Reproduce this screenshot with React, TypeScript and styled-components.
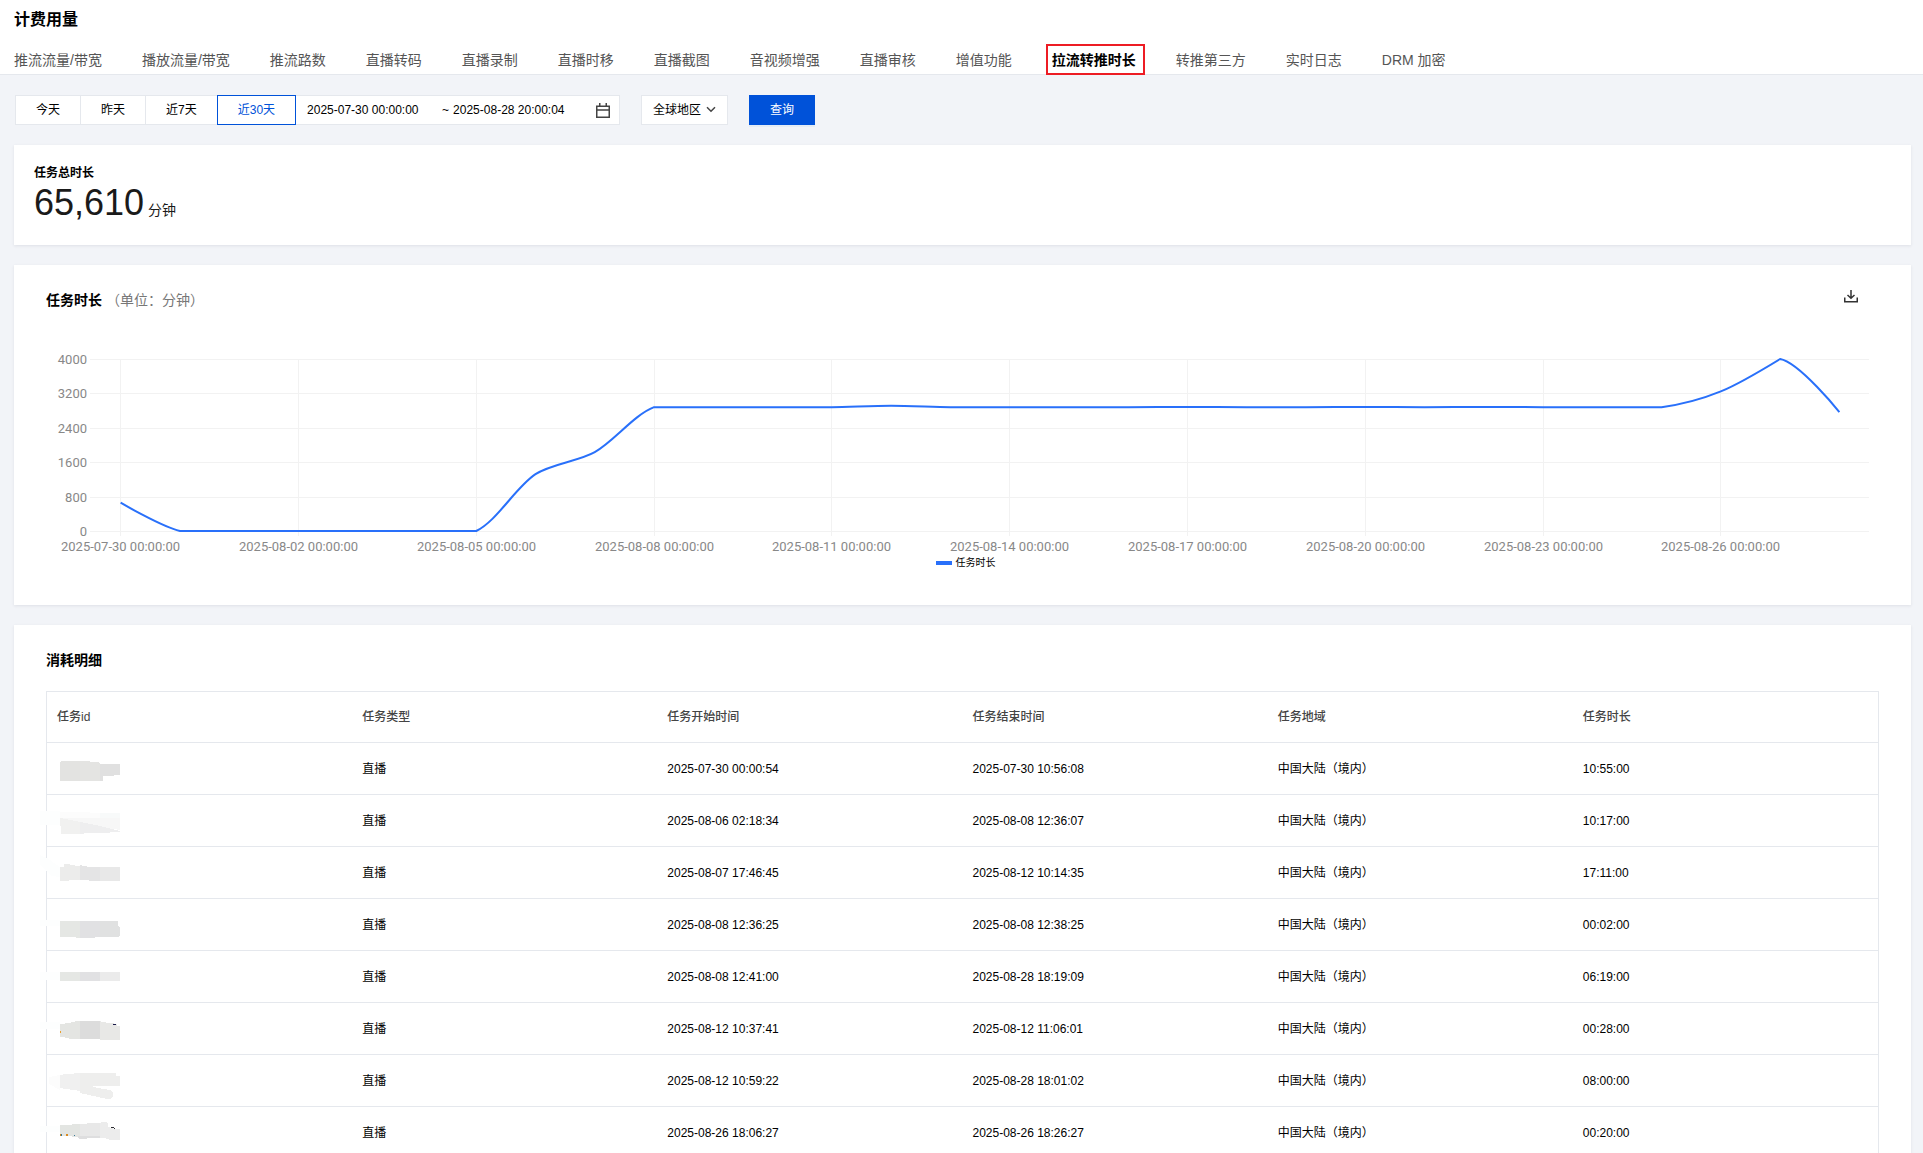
import React, { useLayoutEffect, useRef, useState } from 'react';
import styled, { createGlobalStyle, css } from 'styled-components';

const GlobalStyle = createGlobalStyle`
  *, *::before, *::after { box-sizing: border-box; }
  html { scrollbar-width: none; }
  body {
    margin: 0;
    background: #f2f4f8;
    color: #000;
    font-family: "Liberation Sans", "Noto Sans CJK SC", sans-serif;
    font-size: 12px;
    line-height: 20px;
  }
  button, input, select { font: inherit; color: inherit; margin: 0; }
  h1, h2, p { margin: 0; }
`;

const Header = styled.header`
  background: #fff;
  border-bottom: 1px solid #e5e8ed;
  padding: 9px 14px 0;
`;

const PageTitle = styled.h1`
  font-size: 16px;
  line-height: 22px;
  font-weight: 700;
`;

const Tabs = styled.nav`
  display: flex;
  gap: 40px;
  padding: 19px 0 4px;
`;

const Tab = styled.a<{ $active?: boolean }>`
  position: relative;
  font-size: 14px;
  line-height: 20px;
  white-space: nowrap;
  text-decoration: none;
  color: ${(p) => (p.$active ? '#000' : '#555')};
  font-weight: ${(p) => (p.$active ? 700 : 400)};

  ${(p) =>
    p.$active &&
    css`
      &::after {
        content: '';
        position: absolute;
        inset: -6px -9px -5px -6px;
        border: 2px solid #ed1c24;
      }
    `}
`;

const Main = styled.main`
  display: flex;
  flex-direction: column;
  gap: 20px;
  padding: 20px 12px 20px 14px;
`;

const Toolbar = styled.form`
  display: flex;
  gap: 21px;
  padding: 0 1px;
`;

const RangeGroup = styled.div`
  display: flex;
`;

const Preset = styled.button<{ $active?: boolean }>`
  position: relative;
  z-index: ${(p) => (p.$active ? 1 : 0)};
  height: 30px;
  padding: 0 20px;
  border: 1px solid ${(p) => (p.$active ? '#0052d9' : '#e5e8ed')};
  color: ${(p) => (p.$active ? '#0052d9' : '#000')};
  background: #fff;
  white-space: nowrap;
  line-height: 18px;

  & + & { margin-left: -1px; }
`;

const DateRange = styled.div`
  display: flex;
  align-items: center;
  gap: 4px;
  width: 325px;
  height: 30px;
  margin-left: -1px;
  padding: 0 9px 0 11px;
  border: 1px solid #e5e8ed;
  background: #fff;

  svg { margin-left: auto; }
`;

const DateInput = styled.input`
  width: 131px;
  height: 20px;
  padding: 0;
  border: 0;
  outline: 0;
  background: transparent;
`;

const SelectBox = styled.div`
  position: relative;

  svg {
    position: absolute;
    right: 12px;
    top: 11px;
    pointer-events: none;
  }
`;

const Select = styled.select`
  appearance: none;
  height: 30px;
  padding: 0 25px 0 11px;
  border: 1px solid #e5e8ed;
  border-radius: 0;
  background: #fff;
`;

const Submit = styled.button`
  height: 30px;
  padding: 0 21px;
  border: 0;
  background: #0052d9;
  color: #fff;
  line-height: 18px;
  box-shadow: 0 2px 0 #e4ecf5;
`;

const Card = styled.section<{ $compact?: boolean }>`
  background: #fff;
  box-shadow: 0 1px 3px rgba(54, 58, 80, 0.1);
  padding: ${(p) => (p.$compact ? '18px 20px 22px' : '25px 32px 34px')};
`;

const StatLabel = styled.h2`
  font-size: 12px;
  line-height: 20px;
  font-weight: 700;
`;

const Stat = styled.p`
  display: flex;
  align-items: baseline;
  gap: 4px;
  height: 40px;
  font-size: 36px;
  line-height: 40px;
  color: #1a1a1a;
`;

const StatUnit = styled.span`
  font-size: 14px;
  line-height: 20px;
`;

const CardHead = styled.div`
  display: flex;
  align-items: flex-start;
  justify-content: space-between;
`;

const CardTitle = styled.h2`
  font-size: 14px;
  line-height: 20px;
  font-weight: 700;
`;

const CardUnit = styled.span`
  margin-left: 4px;
  font-weight: 400;
  color: #777;
`;

const IconButton = styled.button`
  display: flex;
  margin-right: 21px;
  padding: 0;
  border: 0;
  background: none;
`;

const ChartBox = styled.div`
  height: 245px;

  svg { display: block; }
  text {
    font-family: Roboto, "Noto Sans CJK SC", sans-serif;
    font-size: 13px;
    fill: #888;
  }
`;

const Legend = styled.div`
  display: flex;
  align-items: center;
  justify-content: center;
  gap: 4px;
  padding-left: 6px;
  font-size: 10px;
  line-height: 16px;
`;

const LegendMark = styled.span`
  width: 16px;
  height: 4px;
  background: #2970fa;
`;

const Table = styled.table`
  width: 100%;
  margin-top: 21px;
  table-layout: fixed;
  border-collapse: separate;
  border-spacing: 0;
  border: 1px solid #e5e8ed;
`;

const HeadCell = styled.th`
  height: 51px;
  padding: 0 10px;
  text-align: left;
  font-weight: 500;
  color: #444;
  border-bottom: 1px solid #e5e8ed;
`;

const Cell = styled.td`
  height: 52px;
  padding: 0 10px;
  white-space: nowrap;
  border-bottom: 1px solid #e5e8ed;

  svg { display: block; overflow: visible; }
`;

const TABS = [
  '推流流量/带宽', '播放流量/带宽', '推流路数', '直播转码', '直播录制', '直播时移', '直播截图',
  '音视频增强', '直播审核', '增值功能', '拉流转推时长', '转推第三方', '实时日志', 'DRM 加密',
];

const PRESETS = ['今天', '昨天', '近7天', '近30天'];

const COLUMNS = ['任务id', '任务类型', '任务开始时间', '任务结束时间', '任务地域', '任务时长'];

const ROWS = [
  ['2025-07-30 00:00:54', '2025-07-30 10:56:08', '10:55:00'],
  ['2025-08-06 02:18:34', '2025-08-08 12:36:07', '10:17:00'],
  ['2025-08-07 17:46:45', '2025-08-12 10:14:35', '17:11:00'],
  ['2025-08-08 12:36:25', '2025-08-08 12:38:25', '00:02:00'],
  ['2025-08-08 12:41:00', '2025-08-28 18:19:09', '06:19:00'],
  ['2025-08-12 10:37:41', '2025-08-12 11:06:01', '00:28:00'],
  ['2025-08-12 10:59:22', '2025-08-28 18:01:02', '08:00:00'],
  ['2025-08-26 18:06:27', '2025-08-26 18:26:27', '00:20:00'],
];

// Masked task ids: each entry is a list of [fill, path] patches.
const MASKS: [string, string][][] = [
  [
    ['#e3e3e1', 'M3 10h1v-1h19v20H3z'],
    ['#e4e4e2', 'M23 9h10v1h9v1h1v18H23z'],
    ['#e0e0e0', 'M43 12h20v11h-6v1H46v5h-3z'],
  ],
  [
    ['#fdfefe', 'M-17 7H3v14h-20z'],
    ['#fcfcfc', 'M3 8h30v1h10v8H3z'],
    ['#f8fafa', 'M43 9h20v8H43z'],
    ['#f7f7f7', 'M3 14h60v12L3 17z'],
    ['#f1f1f0', 'M3 14l20 4v12H4V22H3z'],
    ['#eeeeef', 'M23 18l20 4 20 5v1H53v1H27v1h-4z'],
  ],
  [
    ['#fdfefe', 'M-17-1l7 3 13 9v10l-9-1-11-12z'],
    ['#ececeb', 'M3 11h4V8h6v1h5v1h5v14H12v1H3z'],
    ['#e4e4e5', 'M23 9h2v1h5v1h13v14H32v-1h-9z'],
    ['#e8e8e8', 'M43 11h20v14H43z'],
  ],
  [
    ['#fdfefe', 'M-17 12H3v6h-20z'],
    ['#e5e7e4', 'M3 13h20v17h-4v-1H3z'],
    ['#e1e1e3', 'M23 13h20v16h-5v1H23z'],
    ['#e0e1e1', 'M43 13h18v5h1v1h1v9h-1v1H43z'],
  ],
  [
    ['#fdfefe', 'M-17 12H3v8h-20z'],
    ['#e5e7e4', 'M3 12h20v9H3z'],
    ['#e1e1e3', 'M23 12h20v9H23z'],
    ['#ebebeb', 'M43 12h20v9H43z'],
  ],
  [
    ['#fdfefe', 'M-17 10H3v7h-20z'],
    ['#e4e5e2', 'M3 12h5v-1h6v-1h4V9h5v18H12v-1H8v-1H3z'],
    ['#dcdcdc', 'M23 9h20v18H23z'],
    ['#e8e8e6', 'M43 9h1v1h5v1h8v1h3v2h3v14H43z'],
    ['#1a1a4a', 'M56 12h3v1h-3z'],
    ['#e8a030', 'M3 19h1v2H3z'],
  ],
  [
    ['#fcfcfc', 'M-8 13L3 11v15L-8 20z'],
    ['#f0f0f0', 'M3 11h3v-1h11v-1h6v18L3 24z'],
    ['#eeeeed', 'M23 9h36v3h4v10H36v1l17 3q5 2 3 6-2 4-6 3L23 29z'],
  ],
  [
    ['#fdfefe', 'M-17 10H3v6h-20z'],
    ['#e3e5e2', 'M3 9h12V8h8v13H15v-1H3z'],
    ['#e8e8e8', 'M23 8h7V7h13v15H23z'],
    ['#dededf', 'M21 20h22v2H30v1h-8z'],
    ['#ececec', 'M43 7h1V6h6v1h1v4l6 2h6v11H53l-6-2h-4z'],
    ['#2a2a30', 'M54 11h3v1h-3zM57 12h1v1h-1z'],
    ['#d98a20', 'M3 18h1v2H3zM9 18h2v2H9z'],
    ['#3a7a98', 'M4 18h1v2H4zM17 19h1v1h-1z'],
  ],
];

const USAGE = [
  658, 0, 0, 0, 0, 0, 0, 1321, 1833, 2880, 2880, 2880, 2880, 2910, 2880, 2880, 2880, 2880, 2886,
  2880, 2880, 2886, 2880, 2886, 2880, 2880, 2880, 3247, 4000, 2767,
];

const Y_TICKS = [4000, 3200, 2400, 1600, 800, 0];
const PLOT = { left: 45, right: 10, top: 49, bottom: 221 };
const SMOOTHNESS = 0.3;

function dayLabel(index: number) {
  const day = new Date(Date.UTC(2025, 6, 30 + index));
  return `${day.toISOString().slice(0, 10)} 00:00:00`;
}

type Point = { x: number; y: number };

// Catmull-Rom style curve whose handles collapse onto the point when they
// would leave the range of the neighbouring segment.
function smoothPath(points: Point[]) {
  const handle = (i: number, side: 1 | -1): Point => {
    const p = points[i];
    const prev = points[i - 1];
    const next = points[i + 1];
    if (!prev || !next) return p;
    const before = Math.hypot(p.x - prev.x, p.y - prev.y);
    const after = Math.hypot(next.x - p.x, next.y - p.y);
    const k = (SMOOTHNESS * side * (side > 0 ? after : before)) / (before + after);
    const h = { x: p.x + (next.x - prev.x) * k, y: p.y + (next.y - prev.y) * k };
    const other = side > 0 ? next : prev;
    const inside = h.y >= Math.min(p.y, other.y) && h.y <= Math.max(p.y, other.y);
    return inside ? h : p;
  };
  return points.reduce((d, p, i) => {
    if (i === 0) return `M${p.x},${p.y}`;
    const a = handle(i - 1, 1);
    const b = handle(i, -1);
    return `${d}C${a.x},${a.y} ${b.x},${b.y} ${p.x},${p.y}`;
  }, '');
}

function UsageChart() {
  const box = useRef<HTMLDivElement>(null);
  const [width, setWidth] = useState(1832);

  useLayoutEffect(() => {
    const el = box.current;
    if (!el) return;
    const update = () => setWidth(el.clientWidth);
    update();
    const observer = new ResizeObserver(update);
    observer.observe(el);
    return () => observer.disconnect();
  }, []);

  const end = width - PLOT.right;
  const band = (end - PLOT.left) / USAGE.length;
  const px = (i: number) => PLOT.left + band * (i + 0.5);
  const py = (v: number) => PLOT.bottom - (v / 4000) * (PLOT.bottom - PLOT.top);
  const ticks = USAGE.map((_, i) => i).filter((i) => i % 3 === 0);

  return (
    <ChartBox ref={box}>
      <svg width={width} height={245} role="img" aria-label="任务时长">
        {Y_TICKS.map((v) => {
          const y = Math.round(py(v)) + 0.5;
          return (
            <g key={v}>
              <line x1={PLOT.left - 1} x2={end} y1={y} y2={y} stroke="#f2f2f2" />
              <text x={PLOT.left - 4} y={y + 4} textAnchor="end">{v}</text>
            </g>
          );
        })}
        {ticks.map((i) => {
          const x = Math.floor(px(i)) + 0.5;
          return (
            <g key={i}>
              <line x1={x} x2={x} y1={PLOT.top} y2={PLOT.bottom + 5} stroke="#f2f2f2" />
              <text x={x} y={PLOT.bottom + 20} textAnchor="middle">{dayLabel(i)}</text>
            </g>
          );
        })}
        <path
          d={smoothPath(USAGE.map((v, i) => ({ x: px(i), y: py(v) })))}
          fill="none"
          stroke="#2970fa"
          strokeWidth={2}
        />
      </svg>
    </ChartBox>
  );
}

const CalendarIcon = () => (
  <svg width="14" height="15" viewBox="0 0 14 15" fill="none" stroke="#444" strokeWidth="1.5">
    <path d="M.75 3.25h12.5v11H.75zM.75 7h12.5M3.75 0v3M10.25 0v3" />
  </svg>
);

const ChevronIcon = () => (
  <svg width="10" height="7" viewBox="0 0 10 7" fill="none" stroke="#444" strokeWidth="1.5">
    <path d="M1 1.25l4 4 4-4" />
  </svg>
);

const DownloadIcon = () => (
  <svg width="14" height="13" viewBox="0 0 14 13" fill="none" stroke="#333">
    <path d="M.75 7.5v4.25h12.5V7.5" strokeWidth="1.5" />
    <path d="M7 0v8M3.5 5L7 8.25 10.5 5" strokeWidth="1.5" />
  </svg>
);

export default function App() {
  return (
    <>
      <GlobalStyle />
      <Header>
        <PageTitle>计费用量</PageTitle>
        <Tabs>
          {TABS.map((name) => (
            <Tab key={name} href="#" $active={name === '拉流转推时长'}>{name}</Tab>
          ))}
        </Tabs>
      </Header>
      <Main>
        <Toolbar onSubmit={(e) => e.preventDefault()}>
          <RangeGroup>
            {PRESETS.map((name) => (
              <Preset key={name} type="button" $active={name === '近30天'}>{name}</Preset>
            ))}
            <DateRange>
              <DateInput aria-label="开始时间" defaultValue="2025-07-30 00:00:00" />
              <span>~</span>
              <DateInput aria-label="结束时间" defaultValue="2025-08-28 20:00:04" />
              <CalendarIcon />
            </DateRange>
          </RangeGroup>
          <SelectBox>
            <Select aria-label="地区">
              <option>全球地区</option>
            </Select>
            <ChevronIcon />
          </SelectBox>
          <Submit type="submit">查询</Submit>
        </Toolbar>

        <Card $compact>
          <StatLabel>任务总时长</StatLabel>
          <Stat>65,610<StatUnit>分钟</StatUnit></Stat>
        </Card>

        <Card>
          <CardHead>
            <CardTitle>任务时长<CardUnit>（单位：分钟）</CardUnit></CardTitle>
            <IconButton type="button" aria-label="下载"><DownloadIcon /></IconButton>
          </CardHead>
          <UsageChart />
          <Legend><LegendMark />任务时长</Legend>
        </Card>

        <Card>
          <CardTitle>消耗明细</CardTitle>
          <Table>
            <thead>
              <tr>{COLUMNS.map((name) => <HeadCell key={name} scope="col">{name}</HeadCell>)}</tr>
            </thead>
            <tbody>
              {ROWS.map(([start, finish, duration], i) => (
                <tr key={start}>
                  <Cell>
                    <svg width="70" height="34" aria-hidden="true" shapeRendering="crispEdges">
                      {MASKS[i].map(([fill, d]) => <path key={d} fill={fill} d={d} />)}
                    </svg>
                  </Cell>
                  <Cell>直播</Cell>
                  <Cell>{start}</Cell>
                  <Cell>{finish}</Cell>
                  <Cell>中国大陆（境内）</Cell>
                  <Cell>{duration}</Cell>
                </tr>
              ))}
            </tbody>
          </Table>
        </Card>
      </Main>
    </>
  );
}
